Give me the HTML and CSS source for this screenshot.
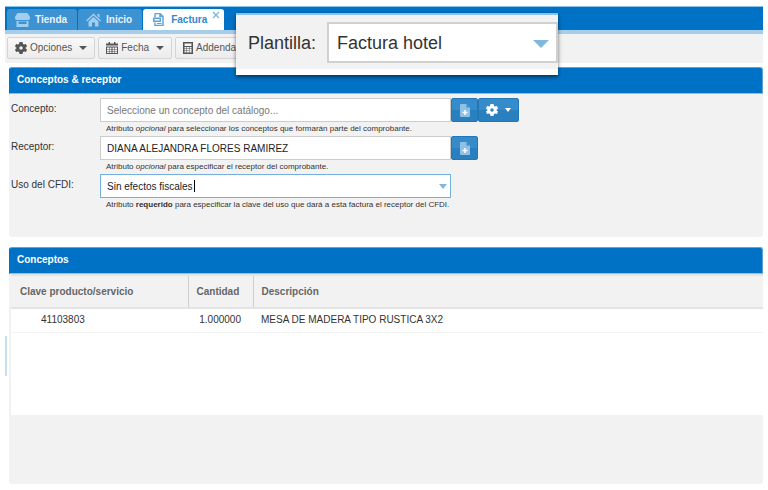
FILE: index.html
```html
<!DOCTYPE html>
<html lang="es">
<head>
<meta charset="utf-8">
<title>Factura</title>
<link rel="stylesheet" href="styles.css">
</head>
<body>
<svg class="defs" aria-hidden="true">
  <symbol id="gear" viewBox="0 0 24 24"><path fill-rule="evenodd" d="M9 0h6l1 4 2 1 4-1 2 5-3 2.500v1L24 15l-2 5-4-1-2 1-1 4H9l-1-4-2-1-4 1-2-5 3-2.500v-1L0 9l2-5 4 1 2-1zM12 8.500a3.500 3.500 0 1 0 0 7 3.500 3.500 0 0 0 0-7z"/></symbol>
  <symbol id="file" viewBox="0 0 20 26"><path d="M2 0h11l7 7v17q0 2-2 2H2q-2 0-2-2V2q0-2 2-2z"/><path d="M13 0l7 7h-7z" fill="#3b8ccb"/><path d="M10 12v10M5 17h10" stroke="#fff" stroke-width="3"/></symbol>
</svg>
<main class="app">
  <nav class="tabs">
    <a class="tab" href="#tienda"><svg class="icon" viewBox="0 0 30 28"><path d="M5 0h20l5 8v2q0 4-3 4H3q-3 0-3-4V8z"/><path d="M3 16h24v12H3zm4 1v5h16v-5z" fill-rule="evenodd"/></svg>Tienda</a>
    <a class="tab" href="#inicio"><svg class="icon" viewBox="0 0 30 28"><path d="M15 1l15 14-2 2L15 5 2 17l-2-2zM15 8l10 9v10h-7v-8h-6v8H5V17zM23 2h4v8l-4-4z"/></svg>Inicio</a>
    <a class="tab tab-active" href="#factura"><svg class="icon icon-invoice" viewBox="0 0 22 26"><path d="M4 1h10l6 6v18H4v-6M4 9V1M14 1v6h6" fill="none" stroke="#5ea5d9" stroke-width="3"/><rect x="0" y="9" width="16" height="9" rx="1" fill="#5ea5d9"/><path d="M3 13.500h10" stroke="#fff" stroke-width="3"/><path d="M8 21h9" stroke="#5ea5d9" stroke-width="2"/></svg>Factura<svg class="close" viewBox="0 0 8 8"><path d="M1 1l6 6M7 1L1 7" stroke="#7db4dd" stroke-width="1.300"/></svg></a>
  </nav>
  <div class="toolbar">
    <button class="tool" type="button"><svg class="icon"><use href="#gear"/></svg>Opciones<i class="arrow"></i></button>
    <button class="tool" type="button"><svg class="icon" viewBox="0 0 24 24"><path fill-rule="evenodd" d="M5 0h3v3h8V0h3v3h5v4H0V3h5zM0 9h24v15H0zm2 2v3h4v-3zm5 0v3h4v-3zm6 0v3h4v-3zm5 0v3h4v-3zM2 15v3h4v-3zm5 0v3h4v-3zm6 0v3h4v-3zm5 0v3h4v-3zM2 19v3h4v-3zm5 0v3h4v-3zm6 0v3h4v-3zm5 0v3h4v-3z"/></svg>Fecha<i class="arrow"></i></button>
    <button class="tool" type="button"><svg class="icon icon-calc" viewBox="0 0 20 24"><path fill-rule="evenodd" d="M0 0h20v24H0zm3 3v5h14V3zm0 7v3h4v-3zm5 0v3h4v-3zm5 0v3h4v-3zM3 14v3h4v-3zm5 0v3h4v-3zm5 0v7h4v-7zM3 18v3h4v-3zm5 0v3h4v-3z"/></svg>Addenda<i class="arrow"></i></button>
  </div>
  <div class="template">
    <label for="plantilla">Plantilla:</label>
    <div class="combo">
      <select id="plantilla"><option>Factura hotel</option></select>
      <i class="arrow"></i>
    </div>
  </div>

  <section class="panel">
    <h2>Conceptos &amp; receptor</h2>
    <form class="form">
      <label for="concepto">Concepto:</label>
      <div class="control">
        <input id="concepto" type="text" placeholder="Seleccione un concepto del catálogo...">
        <button class="action" type="button" aria-label="Agregar concepto"><svg class="icon-file"><use href="#file"/></svg></button>
        <button class="action action-menu" type="button" aria-label="Opciones de concepto"><svg class="icon"><use href="#gear"/></svg><i class="arrow"></i></button>
      </div>
      <p>Atributo <em>opcional</em> para seleccionar los conceptos que formarán parte del comprobante.</p>
      <label for="receptor">Receptor:</label>
      <div class="control">
        <input id="receptor" type="text" value="DIANA ALEJANDRA FLORES RAMIREZ">
        <button class="action" type="button" aria-label="Agregar receptor"><svg class="icon-file"><use href="#file"/></svg></button>
      </div>
      <p>Atributo <em>opcional</em> para especificar el receptor del comprobante.</p>
      <label for="uso">Uso del CFDI:</label>
      <div class="control">
        <div class="combo combo-focus">
          <input id="uso" type="text" role="combobox" aria-expanded="false" value="Sin efectos fiscales">
          <i class="caret"></i>
          <i class="arrow"></i>
        </div>
      </div>
      <p>Atributo <strong>requerido</strong> para especificar la clave del uso que dará a esta factura el receptor del CFDI.</p>
    </form>
  </section>

  <section class="panel panel-list">
    <h2>Conceptos</h2>
    <div class="list">
      <table>
        <thead><tr><th class="col-key">Clave producto/servicio</th><th class="col-qty">Cantidad</th><th>Descripción</th></tr></thead>
        <tbody><tr><td class="key">41103803</td><td class="qty">1.000000</td><td>MESA DE MADERA TIPO RUSTICA 3X2</td></tr></tbody>
      </table>
    </div>
  </section>
  <i class="splitter"></i>
</main>
</body>
</html>
```
FILE: styles.css
```css
* { box-sizing: border-box; }
body {
  margin: 0;
  background: #fff;
  color: #333;
  font: 10px/14px "Liberation Sans", Arial, sans-serif;
}
button, input, select { font: inherit; color: inherit; margin: 0; }
.defs { position: absolute; width: 0; height: 0; }
.app {
  position: relative;
  display: flex;
  flex-direction: column;
  min-height: 100vh;
  padding: 6px 5px;
}
.icon { width: 12px; height: 12px; flex: none; fill: currentColor; }
.arrow {
  width: 0;
  height: 0;
  flex: none;
  border: 4px solid transparent;
  border-top: 4px solid;
  border-bottom: 0;
}

.tabs {
  display: flex;
  gap: 1px;
  height: 28px;
  padding: 2px 2px 0;
  background: #0072c6;
  border-top: 1px solid #8cc0e6;
  border-bottom: 4px solid #a6cde9;
}
.tab {
  display: flex;
  align-items: center;
  gap: 5px;
  padding: 0 10px 0 8px;
  border-radius: 3px 3px 0 0;
  background: #3d92d2;
  color: #e9f4fc;
  font-weight: bold;
  text-decoration: none;
}
.tab .icon { width: 15px; height: 14px; fill: #a3cdec; }
.tab-active { background: #fff; color: #3289ca; padding: 0 4px 0 10px; }
.tab .icon-invoice { width: 11px; height: 13px; margin-right: 2px; }
.close { width: 8px; height: 8px; align-self: flex-start; margin-top: 2px; }

.toolbar {
  display: flex;
  gap: 3px;
  padding: 3px 2px 4px;
  background: #f2f2f2;
}
.tool {
  display: flex;
  align-items: center;
  gap: 3px;
  height: 22px;
  padding: 0 7px;
  border: 1px solid #d4d4d4;
  border-radius: 2px;
  background: linear-gradient(#f8f8f8, #ececec);
  color: #555;
}
.tool .icon { fill: #555; }
.tool .icon-calc { width: 10px; }
.tool .arrow { margin-left: 4px; color: #555; }

.template {
  position: absolute;
  z-index: 1;
  top: 13px;
  left: 236px;
  display: flex;
  align-items: center;
  gap: 11px;
  padding: 7px 0 6px 12px;
  border-top: 2px solid #8cc0e6;
  border-bottom: 6px solid #fff;
  background: #f2f2f2;
  box-shadow: 0 2px 4px rgba(0, 0, 0, .55);
  font-size: 18px;
}
.combo { position: relative; width: 351px; }
.combo .arrow { position: absolute; top: 10px; right: 4px; color: #80b7df; border-width: 5px 4px 0; }
.template .combo { width: 231px; }
.template .arrow { top: 18px; right: 9px; border-width: 8px 8px 0; }
.template select {
  display: block;
  appearance: none;
  width: 100%;
  height: 41px;
  padding: 0 8px;
  border: 2px solid #d0d0d0;
  border-radius: 0;
  background: #fff;
}

.panel { margin: 4px 0 0 4px; background: #f2f2f2; border-radius: 3px; }
.panel h2 {
  margin: 0;
  padding: 5px 7px 6px;
  border: 1px solid #5ba5dc;
  border-color: #5ba5dc #5ba5dc #8cc0e6 #0072c6;
  border-radius: 3px 3px 0 0;
  background: #0072c6;
  color: #fff;
  font-size: 10px;
  line-height: 14px;
}
.form {
  display: grid;
  grid-template-columns: 89px 1fr;
  padding: 4px 0 25px 2px;
}
.form label { line-height: 22px; }
.control { display: flex; height: 24px; }
.control input {
  width: 351px;
  height: 24px;
  padding: 0 6px;
  border: 1px solid #ccc;
  border-radius: 0;
  background: #fff;
  color: #222;
}
.control input::placeholder { color: #777; }
.control .combo-focus input { border-color: #75afdb; outline: 0; }
.caret { position: absolute; top: 6px; left: 94px; width: 1px; height: 12px; background: #000; }
.action {
  display: flex;
  align-items: center;
  justify-content: center;
  width: 27px;
  padding: 0;
  border: 1px solid #2277b9;
  border-radius: 2px;
  background: linear-gradient(#368ccb 50%, #2a7fbf 50%);
  color: #fff;
}
.action-menu { width: 41px; gap: 7px; }
.action-menu .arrow { border-width: 4px 3px 0; }
.icon-file { width: 10px; height: 13px; fill: #8fc1e6; }
.form p {
  grid-column: 2;
  margin: 0;
  padding: 0 6px;
  font-size: 8px;
  line-height: 14px;
}

.panel-list { flex: 1; margin-top: 10px; }
.list {
  min-height: 141px;
  padding-left: 2px;
  background: linear-gradient(#fff, #fff) 2px 0 no-repeat;
}
.list table { width: 100%; border-collapse: collapse; }
th {
  height: 33px;
  padding: 0 8px;
  border-top: 2px solid #e4e4e4;
  border-bottom: 2px solid #e4e4e4;
  border-left: 1px solid #d0d0d0;
  background: #f2f2f2;
  color: #666;
  text-align: left;
}
th:first-child { padding-left: 9px; border-left: 0; }
.col-key { width: 177px; }
.col-qty { width: 65px; }
td { height: 24px; padding: 0 8px; border-bottom: 1px solid #f2f2f2; }
.key { padding-left: 30px; }
.qty { text-align: right; padding-right: 12px; }
.splitter { position: absolute; left: 5px; top: 336px; width: 2px; height: 40px; background: #c5e0f3; }
```
